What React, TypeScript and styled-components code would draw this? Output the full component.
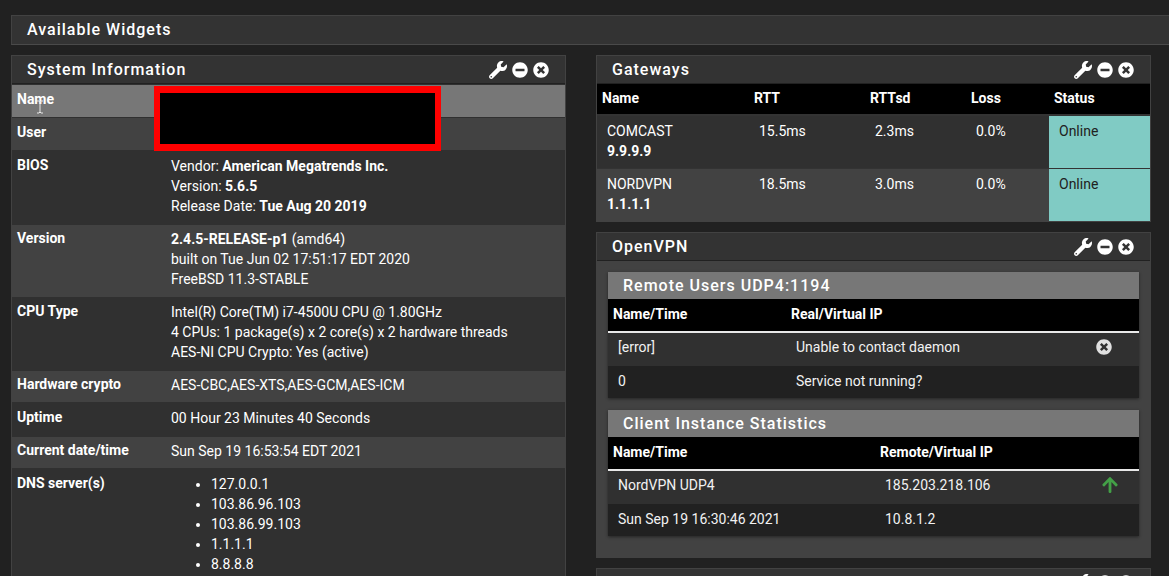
import React from "react";
import styled, { createGlobalStyle } from "styled-components";
import { FaWrench, FaMinusCircle, FaTimesCircle, FaArrowUp } from "react-icons/fa";

const Global = createGlobalStyle`
  html, body { margin: 0; padding: 0; background: #212121; overflow: hidden; }
  * { box-sizing: border-box; }
`;

const Page = styled.div`
  position: relative;
  width: 1169px;
  height: 576px;
  overflow: hidden;
  padding: 15px 0 0 11px;
  background: #212121;
  color: #fff;
  font: 400 14px/20px Roboto, "Liberation Sans", sans-serif;
`;

const WidgetsBar = styled.div`
  height: 30px;
  margin-right: -1px;
  padding-left: 15px;
  display: flex;
  align-items: center;
  background: #333;
  border: 1px solid #424242;
  border-bottom-color: #4a4a4a;
  font: 500 16px/20px Roboto, sans-serif;
  letter-spacing: 1px;
  margin-bottom: 10px;
`;

const Columns = styled.div`
  display: grid;
  grid-template-columns: 555px 555px;
  column-gap: 30px;
  align-items: start;
`;

const Stack = styled.div`
  display: flex;
  flex-direction: column;
  gap: 10px;
`;

const Panel = styled.section`
  background: #424242;
  border: 1px solid #424242;
`;

const PanelHead = styled.header`
  height: 28px;
  padding: 0 16px 0 15px;
  display: flex;
  align-items: center;
  justify-content: space-between;
  background: #333;
  border-bottom: 1px solid #212121;
`;

const PanelTitle = styled.h2`
  margin: 0;
  padding-top: 1px;
  font: 500 16px/20px Roboto, sans-serif;
  letter-spacing: 1px;
  color: #fff;
`;

const Tools = styled.div`
  display: flex;
  align-items: center;
  gap: 5px;
  color: #fff;
  font-size: 16px;
  svg { display: block; }
`;

const Wrench = styled(FaWrench)`
  font-size: 18px;
`;

const Tool = () => (
  <Tools>
    <Wrench />
    <FaMinusCircle />
    <FaTimesCircle />
  </Tools>
);

/* System information */
const InfoList = styled.div`
  background: #303030;
  padding-top: 1px;
`;

const InfoRow = styled.div<{ $tone: "hi" | "odd" | "even"; $h: number; $pad?: number }>`
  display: grid;
  grid-template-columns: 154px 1fr;
  height: ${(p) => p.$h}px;
  padding: ${(p) => p.$pad ?? 5}px 0 0 5px;
  background: ${(p) => (p.$tone === "hi" ? "#777" : p.$tone === "even" ? "#424242" : "#303030")};
  border-top: 1px solid ${(p) => (p.$tone === "even" ? "#303030" : "transparent")};
`;

const InfoLabel = styled.div`
  font-weight: 700;
  font-size: 14px;
  color: #fff;
  line-height: 20px;
  margin-top: -1px;
`;

const InfoValue = styled.div`
  color: #fff;
  line-height: 20px;
  font-size: 14px;
  b { font-weight: 700; }
`;

const DnsList = styled.ul`
  margin: 0;
  padding: 0 0 0 40px;
  li { line-height: 20px; }
`;

/* Tables */
const Table = styled.table`
  width: 100%;
  border-collapse: collapse;
  table-layout: fixed;
`;

const GatewayTable = styled(Table)`
  border-collapse: separate;
  border-spacing: 0;
`;

const Th = styled.th<{ $w?: number; $rule?: boolean }>`
  width: ${(p) => (p.$w ? `${p.$w}px` : "auto")};
  height: ${(p) => (p.$rule ? 33 : 30)}px;
  padding: 0 0 2px 5px;
  background: #000;
  color: #fff;
  text-align: left;
  font: 700 14px/20px Roboto, sans-serif;
  border-bottom: ${(p) => (p.$rule ? "2px solid #e8e8e8" : "0")};
`;

const GwRow = styled.tr<{ $even?: boolean }>`
  background: ${(p) => (p.$even ? "#424242" : "#303030")};
`;

const GwCell = styled.td<{ $even?: boolean }>`
  height: ${(p) => (p.$even ? 53 : 54)}px;
  padding: 5px 0 0 10px;
  vertical-align: top;
  color: #fff;
  border-top: ${(p) => (p.$even ? 1 : 2)}px solid #333;
  b { display: block; font-weight: 700; }
`;

const StatusCell = styled(GwCell)`
  background: #80cbc4;
  color: #212121;
`;

const VpnBody = styled.div`
  padding: 11px 11px 21px;
  display: flex;
  flex-direction: column;
  gap: 12px;
`;

const SubPanel = styled.div`
  background: #212121;
  box-shadow: 0 1px 3px rgba(0, 0, 0, 0.45);
`;

const SubHead = styled.h3`
  margin: 0;
  height: 27px;
  padding: 0 0 0 15px;
  display: flex;
  align-items: center;
  background: #777;
  color: #fff;
  font: 500 16px/20px Roboto, sans-serif;
  letter-spacing: 1px;
`;

const VpnRow = styled.tr<{ $odd?: boolean }>`
  background: ${(p) => (p.$odd ? "#303030" : "#212121")};
`;

const VpnCell = styled.td<{ $h?: number }>`
  height: ${(p) => p.$h ?? 33}px;
  padding: 0 0 2px 10px;
  vertical-align: middle;
  color: #f2f2f2;
`;

const RowTall = styled(VpnCell)`
  padding-bottom: 6px;
`;

const IconCell = styled(VpnCell)`
  padding: 0 0 6px;
`;

const ErrorIcon = styled(FaTimesCircle)`
  display: block;
  margin-left: 5px;
  font-size: 16px;
  color: #e0e0e0;
`;

const UpIcon = styled(FaArrowUp)`
  display: block;
  margin-left: 10px;
  font-size: 18px;
  color: #43a047;
`;

const Redaction = styled.div`
  position: absolute;
  left: 154px;
  top: 86px;
  width: 287px;
  height: 65px;
  background: #000;
  border: 6px solid #ff0000;
  border-width: 7px 6px 7px 6px;
`;

const Cursor = styled.svg`
  position: absolute;
  left: 36px;
  top: 100px;
  width: 8px;
  height: 14px;
`;

export default function App() {
  return (
    <Page>
      <Global />
      <WidgetsBar>Available Widgets</WidgetsBar>
      <Columns>
        <Panel>
          <PanelHead>
            <PanelTitle>System Information</PanelTitle>
            <Tool />
          </PanelHead>
          <InfoList>
            <InfoRow $tone="hi" $h={32} $pad={4}>
              <InfoLabel>Name</InfoLabel>
              <InfoValue />
            </InfoRow>
            <InfoRow $tone="even" $h={33} $pad={5}>
              <InfoLabel>User</InfoLabel>
              <InfoValue />
            </InfoRow>
            <InfoRow $tone="odd" $h={74}>
              <InfoLabel>BIOS</InfoLabel>
              <InfoValue>
                Vendor: <b>American Megatrends Inc.</b>
                <br />
                Version: <b>5.6.5</b>
                <br />
                Release Date: <b>Tue Aug 20 2019</b>
              </InfoValue>
            </InfoRow>
            <InfoRow $tone="even" $h={73} $pad={4}>
              <InfoLabel>Version</InfoLabel>
              <InfoValue>
                <b>2.4.5-RELEASE-p1</b> (amd64)
                <br />
                built on Tue Jun 02 17:51:17 EDT 2020
                <br />
                FreeBSD 11.3-STABLE
              </InfoValue>
            </InfoRow>
            <InfoRow $tone="odd" $h={73} $pad={4}>
              <InfoLabel>CPU Type</InfoLabel>
              <InfoValue>
                Intel(R) Core(TM) i7-4500U CPU @ 1.80GHz
                <br />
                4 CPUs: 1 package(s) x 2 core(s) x 2 hardware threads
                <br />
                AES-NI CPU Crypto: Yes (active)
              </InfoValue>
            </InfoRow>
            <InfoRow $tone="even" $h={32} $pad={4}>
              <InfoLabel>Hardware crypto</InfoLabel>
              <InfoValue>AES-CBC,AES-XTS,AES-GCM,AES-ICM</InfoValue>
            </InfoRow>
            <InfoRow $tone="odd" $h={34}>
              <InfoLabel>Uptime</InfoLabel>
              <InfoValue>00 Hour 23 Minutes 40 Seconds</InfoValue>
            </InfoRow>
            <InfoRow $tone="even" $h={32} $pad={4}>
              <InfoLabel>Current date/time</InfoLabel>
              <InfoValue>Sun Sep 19 16:53:54 EDT 2021</InfoValue>
            </InfoRow>
            <InfoRow $tone="odd" $h={130}>
              <InfoLabel>DNS server(s)</InfoLabel>
              <InfoValue>
                <DnsList>
                  <li>127.0.0.1</li>
                  <li>103.86.96.103</li>
                  <li>103.86.99.103</li>
                  <li>1.1.1.1</li>
                  <li>8.8.8.8</li>
                </DnsList>
              </InfoValue>
            </InfoRow>
          </InfoList>
        </Panel>

        <Stack>
          <Panel>
            <PanelHead>
              <PanelTitle>Gateways</PanelTitle>
              <Tool />
            </PanelHead>
            <GatewayTable>
              <thead>
                <tr>
                  <Th $w={152}>Name</Th>
                  <Th $w={116}>RTT</Th>
                  <Th $w={101}>RTTsd</Th>
                  <Th $w={83}>Loss</Th>
                  <Th>Status</Th>
                </tr>
              </thead>
              <tbody>
                <GwRow>
                  <GwCell>
                    COMCAST
                    <b>9.9.9.9</b>
                  </GwCell>
                  <GwCell>15.5ms</GwCell>
                  <GwCell>2.3ms</GwCell>
                  <GwCell>0.0%</GwCell>
                  <StatusCell>Online</StatusCell>
                </GwRow>
                <GwRow $even>
                  <GwCell $even>
                    NORDVPN
                    <b>1.1.1.1</b>
                  </GwCell>
                  <GwCell $even>18.5ms</GwCell>
                  <GwCell $even>3.0ms</GwCell>
                  <GwCell $even>0.0%</GwCell>
                  <StatusCell $even>Online</StatusCell>
                </GwRow>
              </tbody>
            </GatewayTable>
          </Panel>

          <Panel>
            <PanelHead>
              <PanelTitle>OpenVPN</PanelTitle>
              <Tool />
            </PanelHead>
            <VpnBody>
              <SubPanel>
                <SubHead>Remote Users UDP4:1194</SubHead>
                <Table>
                  <thead>
                    <tr>
                      <Th $w={178} $rule>Name/Time</Th>
                      <Th $rule>Real/Virtual IP</Th>
                      <Th $w={48} $rule />
                    </tr>
                  </thead>
                  <tbody>
                    <VpnRow $odd>
                      <RowTall $h={34}>[error]</RowTall>
                      <RowTall $h={34}>Unable to contact daemon</RowTall>
                      <IconCell $h={34}><ErrorIcon /></IconCell>
                    </VpnRow>
                    <VpnRow>
                      <VpnCell $h={32}>0</VpnCell>
                      <VpnCell $h={32}>Service not running?</VpnCell>
                      <VpnCell $h={32} />
                    </VpnRow>
                  </tbody>
                </Table>
              </SubPanel>
              <SubPanel>
                <SubHead>Client Instance Statistics</SubHead>
                <Table>
                  <thead>
                    <tr>
                      <Th $w={267} $rule>Name/Time</Th>
                      <Th $rule>Remote/Virtual IP</Th>
                      <Th $w={48} $rule />
                    </tr>
                  </thead>
                  <tbody>
                    <VpnRow $odd>
                      <RowTall $h={34}>NordVPN UDP4</RowTall>
                      <RowTall $h={34}>185.203.218.106</RowTall>
                      <IconCell $h={34}><UpIcon /></IconCell>
                    </VpnRow>
                    <VpnRow>
                      <VpnCell $h={32}>Sun Sep 19 16:30:46 2021</VpnCell>
                      <VpnCell $h={32}>10.8.1.2</VpnCell>
                      <VpnCell $h={32} />
                    </VpnRow>
                  </tbody>
                </Table>
              </SubPanel>
            </VpnBody>
          </Panel>

          <Panel>
            <PanelHead>
              <PanelTitle />
              <Tool />
            </PanelHead>
          </Panel>
        </Stack>
      </Columns>
      <Redaction />
      <Cursor viewBox="0 0 8 14" aria-hidden="true">
        <path d="M1 1h2l1 1 1-1h2M4 2v10M1 13h2l1-1 1 1h2" fill="none" stroke="#e8e8e8" strokeWidth="1" />
      </Cursor>
    </Page>
  );
}
